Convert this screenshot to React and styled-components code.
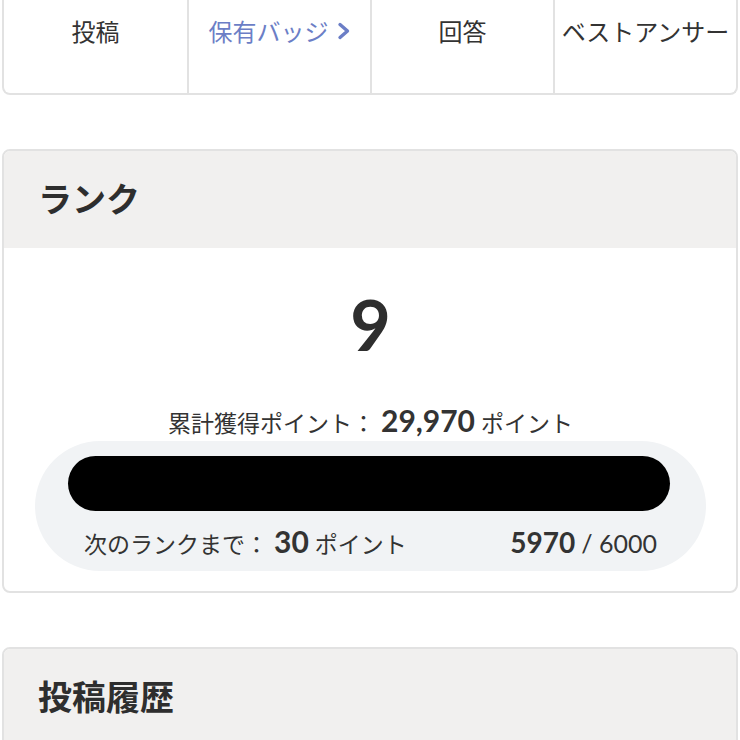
import React from "react";
import styled, { createGlobalStyle } from "styled-components";

const Global = createGlobalStyle`
  html, body { margin: 0; padding: 0; background: #fff; }
  body { font-family: "Lato", "Noto Sans CJK JP", sans-serif; color: #333; }
`;

const Page = styled.div`
  padding: 0 2px;
  display: flex;
  flex-direction: column;
  gap: 54px;
`;

const TabCard = styled.div`
  display: grid;
  grid-template-columns: repeat(4, 1fr);
  border: 2px solid #e2e2e2;
  border-top: none;
  border-radius: 0 0 8px 8px;
  height: 93px;
  background: #fff;
`;

const Tab = styled.div`
  display: flex;
  justify-content: center;
  align-items: flex-start;
  gap: 8px;
  padding-top: 14px;
  font-family: "Noto Sans CJK JP", sans-serif;
  font-size: 24px;
  line-height: 34px;
  color: ${(p) => (p.$link ? "#6b7ec6" : "#333")};
  white-space: nowrap;
  & + & { border-left: 2px solid #e2e2e2; }
`;

const Chevron = styled.svg`
  width: 14px;
  height: 18px;
  margin-top: 8px;
`;

const Card = styled.section`
  border: 2px solid #e2e2e2;
  border-radius: 8px;
  overflow: hidden;
  background: #fff;
`;

const CardHeader = styled.div`
  background: #f1f0ef;
  height: 97px;
  display: flex;
  align-items: center;
  padding-left: 34px;
  padding-bottom: 4px;
  box-sizing: border-box;
`;

const Title = styled.h2`
  margin: 0;
  font-family: "Noto Sans CJK JP", sans-serif;
  font-weight: 700;
  font-size: 34px;
  color: #2e2e2e;
`;

const CardBody = styled.div`
  display: flex;
  flex-direction: column;
  align-items: stretch;
  padding: 42px 30px 20px 31px;
`;

const RankNumber = styled.div`
  text-align: center;
  font-family: "Lato", sans-serif;
  font-weight: 700;
  font-size: 70px;
  line-height: 68px;
  color: #2e2e2e;
`;

const TotalLine = styled.div`
  margin-top: 44px;
  text-align: center;
  font-family: "Noto Sans CJK JP", sans-serif;
  font-size: 23px;
  line-height: 36px;
  color: #333;
  display: flex;
  justify-content: center;
  align-items: baseline;
  gap: 6px;
`;

const Strong = styled.strong`
  font-family: "Lato", sans-serif;
  font-weight: 700;
  font-size: ${(p) => p.$size || 28}px;
  color: #333;
`;

const Light = styled.span`
  font-family: "Lato", "Noto Sans CJK JP", sans-serif;
  font-size: ${(p) => p.$size || 22}px;
`;

const ProgressBox = styled.div`
  margin-top: 1px;
  background: #f1f3f5;
  border-radius: 65px;
  height: 130px;
  box-sizing: border-box;
  padding: 15px 36px 0 33px;
  display: flex;
  flex-direction: column;
`;

const Bar = styled.div`
  height: 55px;
  border-radius: 28px;
  background: #000;
`;

const ProgressRow = styled.div`
  margin-top: 15px;
  display: flex;
  justify-content: space-between;
  align-items: baseline;
  padding: 0 13px 0 16px;
  line-height: 30px;
`;

const Group = styled.span`
  display: flex;
  align-items: baseline;
  gap: 6px;
  font-family: "Noto Sans CJK JP", sans-serif;
  font-size: 23px;
  color: #333;
`;

export default function App() {
  return (
    <>
      <Global />
      <Page>
        <TabCard>
          <Tab>投稿</Tab>
          <Tab $link>
            保有バッジ
            <Chevron viewBox="0 0 14 18">
              <path d="M3 2.5 L10.5 9 L3 15.5" fill="none" stroke="#6b7ec6" strokeWidth="3.4" strokeLinecap="round" strokeLinejoin="round" />
            </Chevron>
          </Tab>
          <Tab>回答</Tab>
          <Tab>ベストアンサー</Tab>
        </TabCard>

        <Card>
          <CardHeader>
            <Title>ランク</Title>
          </CardHeader>
          <CardBody>
            <RankNumber>9</RankNumber>
            <TotalLine>
              <span>累計獲得ポイント：</span>
              <Strong $size={30}>29,970</Strong>
              <span>ポイント</span>
            </TotalLine>
            <ProgressBox>
              <Bar />
              <ProgressRow>
                <Group>
                  <span>次のランクまで：</span>
                  <Strong $size={30}>30</Strong>
                  <span>ポイント</span>
                </Group>
                <Group>
                  <Strong $size={28}>5970</Strong>
                  <Light $size={25}>/ 6000</Light>
                </Group>
              </ProgressRow>
            </ProgressBox>
          </CardBody>
        </Card>

        <Card>
          <CardHeader>
            <Title>投稿履歴</Title>
          </CardHeader>
          <CardBody />
        </Card>
      </Page>
    </>
  );
}
